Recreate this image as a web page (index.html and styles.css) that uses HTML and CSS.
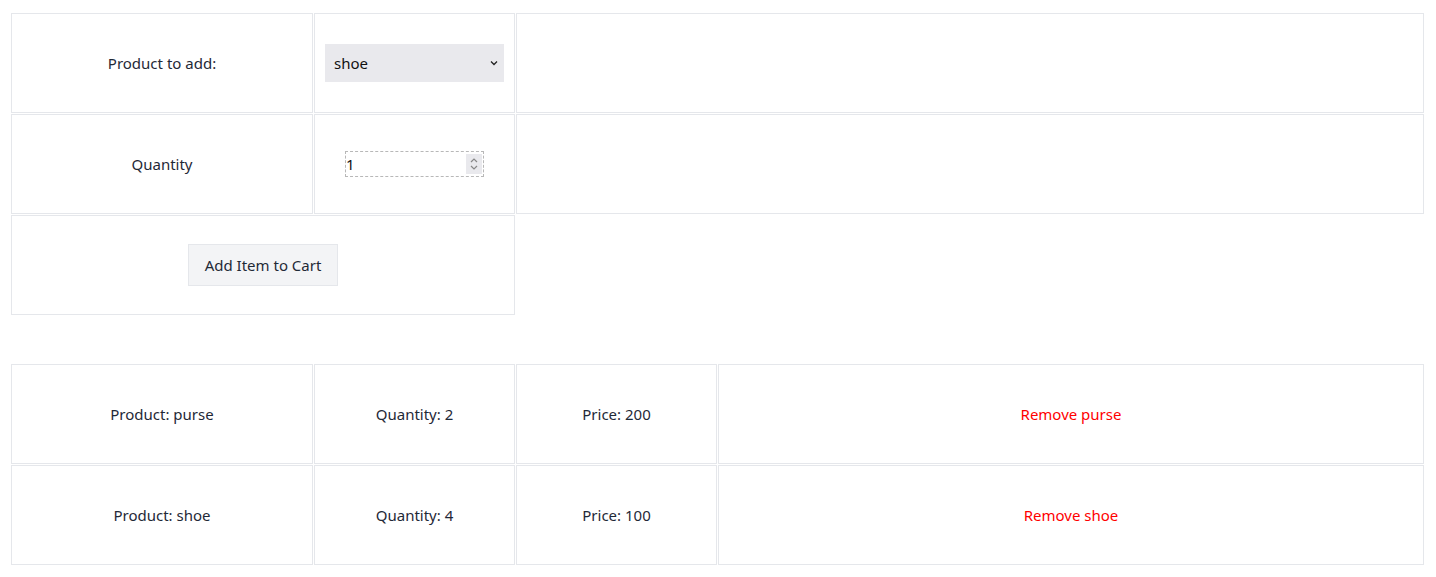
FILE: index.html
```html
<!DOCTYPE html>
<html>
<head>
<meta charset="utf-8">
<link rel="stylesheet" href="styles.css">
</head>
<body>
<div class="page">
  <div class="form-grid">
    <div class="cell">Product to add:</div>
    <div class="cell">
      <span class="select-wrap">
        <select class="select">
          <option>shoe</option>
          <option>purse</option>
        </select>
        <svg class="chev" width="10" height="8" viewBox="0 0 10 8"><path d="M2 2.5 L5 5.5 L8 2.5" fill="none" stroke="#222" stroke-width="1.3"/></svg>
      </span>
    </div>
    <div class="cell"></div>
    <div class="cell">Quantity</div>
    <div class="cell">
      <span class="num-wrap">
        <input class="num" type="text" value="1">
        <span class="spin">
          <svg width="10" height="16" viewBox="0 0 10 16"><path d="M2 6 L5 3 L8 6" fill="none" stroke="#888" stroke-width="1.2"/><path d="M2 10 L5 13 L8 10" fill="none" stroke="#888" stroke-width="1.2"/></svg>
        </span>
      </span>
    </div>
    <div class="cell"></div>
    <div class="cell span2"><button class="btn">Add Item to Cart</button></div>
  </div>

  <div class="cart-grid">
    <div class="cell">Product: purse</div>
    <div class="cell">Quantity: 2</div>
    <div class="cell">Price: 200</div>
    <div class="cell remove">Remove purse</div>
    <div class="cell">Product: shoe</div>
    <div class="cell">Quantity: 4</div>
    <div class="cell">Price: 100</div>
    <div class="cell remove">Remove shoe</div>
  </div>
</div>
</body>
</html>
```

FILE: styles.css
```css
* { box-sizing: border-box; }
html, body { margin: 0; padding: 0; background: #fff; }
body {
  font-family: "Noto Sans", "Open Sans", sans-serif;
  font-size: 15px;
  color: #1f2937;
}
.page {
  padding: 13px 0 0 11px;
  width: 1424px;
}
.form-grid {
  display: grid;
  grid-template-columns: 302px 201px 908px;
  grid-auto-rows: 100px;
  gap: 1px;
}
.cart-grid {
  display: grid;
  grid-template-columns: 302px 201px 201px 706px;
  grid-auto-rows: 100px;
  gap: 1px;
  margin-top: 49px;
}
.cell {
  border: 1px solid #e5e7eb;
  display: flex;
  align-items: center;
  justify-content: center;
}
.span2 { grid-column: span 2; }
.remove { color: #ff0000; }

.select-wrap {
  position: relative;
  display: inline-block;
  width: 179px;
  height: 38px;
}
.select {
  appearance: none;
  -webkit-appearance: none;
  width: 100%;
  height: 100%;
  border: none;
  border-radius: 0;
  background: #e9e9ed;
  font-family: inherit;
  font-size: 15px;
  color: #111;
  padding: 0 0 0 9px;
  outline: none;
}
.chev {
  position: absolute;
  right: 5px;
  top: 15px;
  pointer-events: none;
}
.num-wrap {
  display: inline-flex;
  align-items: stretch;
  width: 139px;
  height: 26px;
  border: 1px dashed #b8b8b8;
}
.num {
  flex: 1;
  min-width: 0;
  border: none;
  outline: none;
  padding: 0;
  font-family: inherit;
  font-size: 15px;
  color: #111;
  background: transparent;
}
.spin {
  width: 16px;
  margin: 2px 1px 2px 0;
  background: #e9e9ed;
  display: flex;
  align-items: center;
  justify-content: center;
}
.btn {
  font-family: inherit;
  font-size: 15px;
  color: #1f2937;
  background: #f3f4f6;
  border: 1px solid #e5e7eb;
  width: 150px;
  height: 42px;
  padding: 0;
}
```
